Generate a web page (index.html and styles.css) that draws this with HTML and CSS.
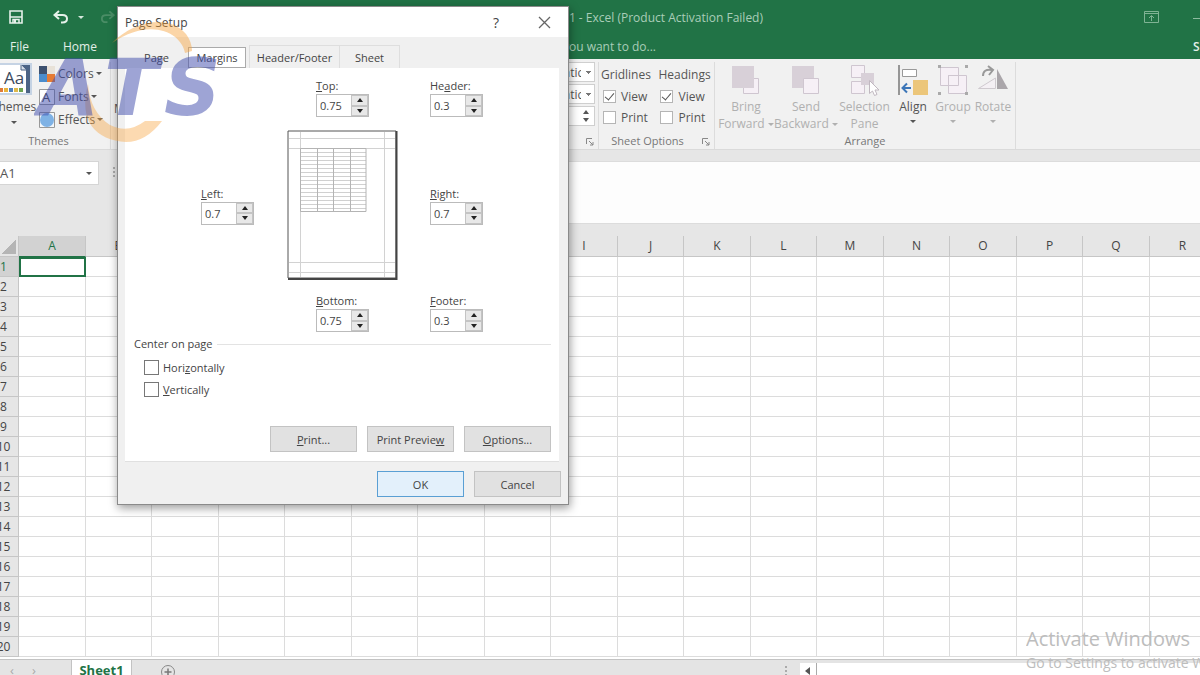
FILE: index.html
```
<!DOCTYPE html>
<html lang="en">
<head>
    <meta charset="utf-8">
    <title>Book1 - Excel</title>
    <link rel="stylesheet" href="styles.css">
</head>
<body>
<div class="app">
    <header class="top">
        <div class="title-bar">
            <div class="quick">
                <button class="icon-btn" aria-label="Save">
                    <svg width="14" height="14" viewBox="0 0 14 14"><path d="M1 1h12v12H1z" fill="none" stroke="#e6f1ea" stroke-width="1.6"/><path d="M1 7h12M4 13V9.500h6V13" fill="none" stroke="#e6f1ea" stroke-width="1.500"/><path d="M5 10h2v3H5z" fill="#e6f1ea"/></svg>
                </button>
                <button class="icon-btn undo" aria-label="Undo">
                    <svg width="16" height="14" viewBox="0 0 16 14"><path d="M6 1L1.500 5L6 9M2 5h7.500c6 0 6 7.500 0 7.500H8" fill="none" stroke="#e6f1ea" stroke-width="2"/></svg>
                </button>
                <span class="caret light"></span>
                <button class="icon-btn redo" aria-label="Redo">
                    <svg width="15" height="14" viewBox="0 0 16 14"><path d="M10 1l4.500 4L10 9M14 5H6.500c-6 0-6 7.500 0 7.500H8" fill="none" stroke="#4a8d66" stroke-width="2"/></svg>
                </button>
            </div>
            <span class="window-title">Book1 - Excel (Product Activation Failed)</span>
            <div class="window-buttons">
                <button class="icon-btn" aria-label="Ribbon display options">
                    <svg width="15" height="12" viewBox="0 0 15 12"><path d="M.5.5h14v11H.5zM.5 2.500h14M7.500 10V5M5 7l2.500-2.500L10 7" fill="none" stroke="#7fb394"/></svg>
                </button>
                <button class="icon-btn" aria-label="Minimize">
                    <svg width="12" height="12" viewBox="0 0 12 12"><path d="M0 7.500h12" stroke="#8dbb9f"/></svg>
                </button>
            </div>
        </div>
        <nav class="menu">
            <a href="#" class="menu-file">File</a>
            <a href="#" class="menu-home">Home</a>
            <span class="tell-me">Tell me what you want to do...</span>
            <a href="#" class="sign-in">Sign in</a>
        </nav>
    </header>

    <section class="ribbon">
        <div class="group themes">
            <div class="group-body">
                <button class="themes-btn">
                    <svg width="36" height="32" viewBox="0 0 36 32"><path d="M0 0h36v32H0z" fill="#c5d3e4"/><path d="M20 2h14v28H20z" fill="#4c6486"/><path d="M2 2h23l5 5v23H2z" fill="#fff"/><path d="M25 2v5h5" fill="#d7dee8" stroke="#4c6486"/><text x="8" y="21" class="aa">Aa</text><path d="M3 25h4v4H3z" fill="#e07b39"/><path d="M8 25h4v4H8z" fill="#e8b33c"/><path d="M13 25h4v4h-4z" fill="#4f82bd"/><path d="M18 25h4v4h-4z" fill="#deb94c"/><path d="M23 25h4v4h-4z" fill="#6ba351"/></svg>
                    <span>Themes</span>
                    <i class="caret"></i>
                </button>
                <div class="theme-list">
                    <button><svg width="18" height="18" viewBox="0 0 18 18"><path d="M1 1h8v8H1z" fill="#3d5170"/><path d="M9 1h8v8H9z" fill="#e8e2d8"/><path d="M1 9h8v8H1z" fill="#4b8ccb"/><path d="M9 9h8v8H9z" fill="#e57b35"/></svg>Colors<span class="caret"></span></button>
                    <button><svg width="18" height="18" viewBox="0 0 18 18"><path d="M1.500 1.500h15v15h-15z" fill="#fff" stroke="#999"/><text x="4" y="14" class="font-a">A</text></svg>Fonts<span class="caret"></span></button>
                    <button><svg width="18" height="18" viewBox="0 0 18 18"><path d="M1.500 1.500h15v15h-15z" fill="#f4f7fa" stroke="#999"/><circle cx="9" cy="9" r="7" fill="#7fb2e5"/></svg>Effects<span class="caret"></span></button>
                </div>
            </div>
            <div class="group-name">Themes</div>
        </div>
        <div class="group page-setup">
            <div class="group-body"><button class="margins-btn">Margins</button></div>
        </div>
        <div class="group scale">
            <div class="group-body scale-body">
                <select aria-label="Width"><option>Automatic</option></select>
                <select aria-label="Height"><option>Automatic</option></select>
                <div class="scale-box"><i class="tri up"></i><i class="tri down"></i></div>
            </div>
            <div class="group-name"><svg class="launcher" width="8" height="8" viewBox="0 0 8 8"><path d="M.5 6V.5H6M3 3l4 4M7 4v3H4" fill="none" stroke="#888"/></svg></div>
        </div>
        <div class="group options">
            <div class="group-body options-body">
                <div class="option-col">
                    <span>Gridlines</span>
                    <label><input type="checkbox" checked>View</label>
                    <label><input type="checkbox">Print</label>
                </div>
                <div class="option-col">
                    <span>Headings</span>
                    <label><input type="checkbox" checked>View</label>
                    <label><input type="checkbox">Print</label>
                </div>
            </div>
            <div class="group-name">Sheet Options<svg class="launcher" width="8" height="8" viewBox="0 0 8 8"><path d="M.5 6V.5H6M3 3l4 4M7 4v3H4" fill="none" stroke="#888"/></svg></div>
        </div>
        <div class="group arrange">
            <div class="group-body arrange-body">
                <button class="tool wide" disabled>
                    <svg width="32" height="32" viewBox="0 0 32 32"><path d="M13.500 14.500h15v15h-15z" fill="#f6f0f6" stroke="#cfc6d0"/><path d="M2 2h22v22H2z" fill="#d8d0d8"/></svg>
                    <span>Bring<br>Forward <i class="caret"></i></span>
                </button>
                <button class="tool wide" disabled>
                    <svg width="32" height="32" viewBox="0 0 32 32"><path d="M2 2h22v22H2z" fill="#d8d0d8"/><path d="M13.500 14.500h15v15h-15z" fill="#f6f0f6" stroke="#cfc6d0"/></svg>
                    <span>Send<br>Backward <i class="caret"></i></span>
                </button>
                <button class="tool mid" disabled>
                    <svg width="32" height="32" viewBox="0 0 32 32"><path d="M2.500 1.500h13v12h-13zM2.500 17.500h13v12h-13z" fill="#f6f0f6" stroke="#cfc6d0"/><path d="M12 9h13v12H12z" fill="#d8d0d8"/><path d="M20.500 16.500v13l3-2.500 2 4.500 2.500-1-2-4.500h4z" fill="#fff" stroke="#c0b8c0"/></svg>
                    <span>Selection<br>Pane</span>
                </button>
                <button class="tool">
                    <svg width="32" height="32" viewBox="0 0 32 32"><path d="M2 1v30" stroke="#777" stroke-width="1.500"/><path d="M5.500 5.500h14v7h-14z" fill="#fff" stroke="#999"/><path d="M16 16h15v15H16z" fill="#ecc67a"/><path d="M14 24H6M10 19.500L5.500 24l4.500 4.500" fill="none" stroke="#3c76b8" stroke-width="2"/></svg>
                    <span>Align<i class="caret below"></i></span>
                </button>
                <button class="tool" disabled>
                    <svg width="32" height="32" viewBox="0 0 32 32"><path d="M3.500 3.500h18v18h-18z" fill="#f6f0f6" stroke="#cfc6d0"/><path d="M11.500 11.500h18v18h-18zM11.500 11.500h10v10h-10z" fill="#f6f0f6" stroke="#cfc6d0"/><path d="M1 1h3v3H1zM28 1h3v3h-3zM1 28h3v3H1zM28 28h3v3h-3z" fill="#aaa"/></svg>
                    <span>Group<i class="caret below"></i></span>
                </button>
                <button class="tool" disabled>
                    <svg width="32" height="32" viewBox="0 0 32 32"><path d="M1.500 24.500L18.500 14v10.500z" fill="#f4f0f4" stroke="#cfcacf"/><path d="M20 5l11 20H20z" fill="#aaa6aa"/><path d="M6 12c0-5 3-7 9-6M11 2l5 4-4 5" fill="none" stroke="#999" stroke-width="2"/></svg>
                    <span>Rotate<i class="caret below"></i></span>
                </button>
            </div>
            <div class="group-name">Arrange</div>
        </div>
    </section>

    <section class="formula-bar">
        <div class="name-box"><input type="text" value="A1" aria-label="Name box"><span class="caret"></span></div>
        <div class="dots"><i></i><i></i><i></i></div>
        <input class="formula" type="text" aria-label="Formula">
    </section>

    <main class="sheet">
        <table>
            <colgroup id="cols"><col class="col-head"></colgroup>
            <thead><tr id="letters"><th class="corner"></th></tr></thead>
            <tbody id="rows"></tbody>
        </table>
    </main>

    <footer class="sheet-bar">
        <div class="sheet-nav"><span>‹</span><span>›</span></div>
        <button class="sheet-tab">Sheet1</button>
        <button class="add-sheet" aria-label="New sheet">
            <svg width="16" height="16" viewBox="0 0 16 16"><circle cx="8" cy="8" r="6.500" fill="none" stroke="#888"/><path d="M8 4.500v7M4.500 8h7" stroke="#777" stroke-width="1.500"/></svg>
        </button>
        <div class="dots"><i></i><i></i><i></i></div>
        <button class="scroll-left" aria-label="Scroll left"><i></i></button>
        <div class="scroll-track"></div>
    </footer>
</div>

<div class="activate">
    <div class="activate-title">Activate Windows</div>
    <div>Go to Settings to activate Windows.</div>
</div>

<div class="dialog" role="dialog" aria-label="Page Setup">
    <div class="dialog-title">
        <span>Page Setup</span>
        <button class="help" aria-label="Help">?</button>
        <button aria-label="Close"><svg width="13" height="13" viewBox="0 0 13 13"><path d="M1 1l11 11M12 1L1 12" stroke="#666" stroke-width="1.300"/></svg></button>
    </div>
    <div class="tabs">
        <button class="tab-page">Page</button>
        <button class="active">Margins</button>
        <button class="tab-hf">Header/Footer</button>
        <button class="tab-sheet">Sheet</button>
    </div>
    <div class="panel">
        <div class="margins">
            <div class="field top-field"><label for="top"><u>T</u>op:</label><div class="spin"><input id="top" type="text" value="0.75"><span class="arrows"><button aria-label="Up"><i class="tri up"></i></button><button aria-label="Down"><i class="tri down"></i></button></span></div></div>
            <div class="field right-col"><label for="header">He<u>a</u>der:</label><div class="spin"><input id="header" type="text" value="0.3"><span class="arrows"><button aria-label="Up"><i class="tri up"></i></button><button aria-label="Down"><i class="tri down"></i></button></span></div></div>
            <div class="field left-col"><label for="left"><u>L</u>eft:</label><div class="spin"><input id="left" type="text" value="0.7"><span class="arrows"><button aria-label="Up"><i class="tri up"></i></button><button aria-label="Down"><i class="tri down"></i></button></span></div></div>
            <svg class="preview" width="111" height="150" viewBox="0 0 111 150">
                <path d="M1 1h108v147H1z" fill="#fff" stroke="#555"/>
                <path d="M109.500 1v148H1" fill="none" stroke="#444" stroke-width="2"/>
                <path d="M13.500 2v145M97.500 2v145M2 8.500h106M2 18.500h106M2 132.500h106M2 142.500h106" stroke="#d2d2d2"/>
                <path d="M13 22.500h66M13 26.500h66M13 30.500h66M13 34.500h66M13 38.500h66M13 42.500h66M13 46.500h66M13 50.500h66M13 54.500h66M13 58.500h66M13 62.500h66M13 66.500h66M13 70.500h66M13 74.500h66M13 78.500h66" stroke="#d0d0d0"/>
                <path d="M13.500 18.500h65.500v63H13.500zM30.500 18v63M46.500 18v63M63.500 18v63" fill="none" stroke="#b4b4b4"/>
            </svg>
            <div class="field right-col"><label for="right"><u>R</u>ight:</label><div class="spin"><input id="right" type="text" value="0.7"><span class="arrows"><button aria-label="Up"><i class="tri up"></i></button><button aria-label="Down"><i class="tri down"></i></button></span></div></div>
            <div class="field top-field"><label for="bottom"><u>B</u>ottom:</label><div class="spin"><input id="bottom" type="text" value="0.75"><span class="arrows"><button aria-label="Up"><i class="tri up"></i></button><button aria-label="Down"><i class="tri down"></i></button></span></div></div>
            <div class="field right-col"><label for="footer"><u>F</u>ooter:</label><div class="spin"><input id="footer" type="text" value="0.3"><span class="arrows"><button aria-label="Up"><i class="tri up"></i></button><button aria-label="Down"><i class="tri down"></i></button></span></div></div>
        </div>
        <div class="center-title">Center on page</div>
        <div class="center-list">
            <label><input type="checkbox"><span>Hori<u>z</u>ontally</span></label>
            <label><input type="checkbox"><span><u>V</u>ertically</span></label>
        </div>
        <div class="panel-buttons">
            <button class="btn"><u>P</u>rint...</button>
            <button class="btn">Print Previe<u>w</u></button>
            <button class="btn"><u>O</u>ptions...</button>
        </div>
    </div>
    <div class="dialog-buttons">
        <button class="btn ok">OK</button>
        <button class="btn">Cancel</button>
    </div>
</div>

<svg class="logo" width="200" height="130" viewBox="0 0 200 130">
    <path d="M78 29C100 6 136 0 152 20Q158 28 158 37L151 39C148 20 118 2 78 29z" fill="#f7a23c" opacity=".45"/>
    <path d="M54 70C44 108 62 126 92 128Q112 128 128 107L111 107Q94 120 76 111Q56 98 54 70z" fill="#f7a23c" opacity=".4"/>
    <text x="4 70 130" y="101" class="logo-text">ATS</text>
</svg>

<script>
    const letters = 'ABCDEFGHIJKLMNOPQR'.split('');
    const cols = document.getElementById('cols');
    const head = document.getElementById('letters');
    const rows = document.getElementById('rows');

    letters.forEach(letter => {
        cols.appendChild(document.createElement('col'));
        const th = document.createElement('th');
        th.textContent = letter;
        head.appendChild(th);
    });

    for (let i = 1; i <= 20; i++) {
        const tr = document.createElement('tr');
        tr.innerHTML = `<th>${i}</th>` + '<td></td>'.repeat(letters.length);
        rows.appendChild(tr);
    }
</script>
</body>
</html>
```

FILE: styles.css
```
* {
    box-sizing: border-box;
}

body {
    margin: 0;
    overflow: hidden;
    font-family: "Open Sans", "Noto Sans", sans-serif;
    font-size: 12px;
    color: #555;
}

button, input, select {
    font: inherit;
    color: inherit;
    margin: 0;
}

button {
    padding: 0;
    border: none;
    background: none;
}

.app {
    height: 100vh;
    display: flex;
    flex-direction: column;
}

.caret {
    display: inline-block;
    border: 3px solid transparent;
    border-top-color: currentColor;
    border-bottom: none;
    vertical-align: middle;
}

.light {
    color: #d5e7dc;
}

/* title and menu */
.top {
    background: #217346;
    color: #d7e8de;
}

.title-bar {
    height: 34px;
    display: flex;
    align-items: center;
}

.quick {
    width: 117px;
    height: 34px;
    padding-left: 9px;
    display: flex;
    align-items: center;
    overflow: hidden;
}

.icon-btn {
    display: flex;
}

.undo {
    margin: 0 9px 0 30px;
}

.redo {
    margin-left: 16px;
}

.window-title {
    width: 646px;
    text-align: right;
    color: #a9cdb8;
}

.window-buttons {
    margin: 0 -5px 0 auto;
    display: flex;
    gap: 34px;
}

.menu {
    height: 25px;
    display: flex;
    align-items: center;
    white-space: nowrap;
    overflow: hidden;
}

.menu a {
    color: #e3efe8;
    text-decoration: none;
}

.menu-file {
    width: 63px;
    padding-left: 10px;
}

.menu-home {
    width: 54px;
}

.tell-me {
    width: 539px;
    text-align: right;
    color: #a9cdb8;
}

.menu .sign-in {
    width: 7px;
    margin-left: auto;
    font-weight: 600;
}

/* ribbon */
.ribbon {
    height: 91px;
    display: flex;
    background: #f1f1f1;
    border-bottom: 1px solid #dadada;
}

.group {
    display: flex;
    flex-direction: column;
    flex-shrink: 0;
    margin: 3px 0 0;
    border-right: 1px solid #dcdcdc;
}

.group-body {
    height: 72px;
    display: flex;
}

.group-name {
    height: 16px;
    line-height: 16px;
    font-size: 11px;
    text-align: center;
    color: #777;
    position: relative;
}

.launcher {
    position: absolute;
    right: 4px;
    top: 5px;
}

.themes {
    width: 111px;
}

.themes .group-name {
    padding-right: 13px;
}

.themes-btn {
    width: 48px;
    margin-left: -10px;
    padding-top: 1px;
    display: flex;
    flex-direction: column;
    align-items: center;
}

.themes-btn span {
    line-height: 24px;
}

.themes-btn .caret {
    margin-top: 2px;
}

.aa {
    font-size: 17px;
    fill: #3c4a5e;
}

.font-a {
    font-size: 13px;
    fill: #444;
}

.theme-list {
    display: flex;
    flex-direction: column;
}

.theme-list button {
    height: 23px;
    display: flex;
    align-items: center;
    gap: 2px;
}

.page-setup {
    width: 400px;
}

.margins-btn {
    padding: 20px 0 0 3px;
}

.scale {
    width: 88px;
}

.scale-body {
    flex-direction: column;
    align-items: flex-end;
    padding-right: 3px;
}

.scale select,
.scale-box {
    width: 72px;
    height: 20px;
    margin-bottom: 2px;
    padding: 0 13px 0 2px;
    background: #fff;
    border: 1px solid #cfcfcf;
    appearance: none;
}

.scale select {
    background: linear-gradient(#777, #777) 62px 8px / 5px 1px no-repeat,
        linear-gradient(#777, #777) 63px 9px / 3px 1px no-repeat,
        linear-gradient(#777, #777) 64px 10px / 1px 1px no-repeat, #fff;
}

.scale-box {
    padding: 3px 5px;
    display: flex;
    flex-direction: column;
    align-items: flex-end;
    justify-content: space-between;
}

.options {
    width: 116px;
}

.options-body {
    padding: 2px 0 0 2px;
}

.option-col {
    width: 58px;
    display: flex;
    flex-direction: column;
}

.option-col + .option-col {
    width: 56px;
}

.option-col span {
    line-height: 22px;
}

.option-col label {
    height: 21px;
    display: flex;
    align-items: center;
    gap: 5px;
    padding-left: 2px;
}

.options .group-name {
    padding-right: 18px;
}

input[type="checkbox"] {
    appearance: none;
    width: 13px;
    height: 13px;
    background: #fff;
    border: 1px solid #b5b5b5;
    display: flex;
    justify-content: center;
}

input[type="checkbox"]:checked::before {
    content: "";
    width: 4px;
    height: 8px;
    border: solid #555;
    border-width: 0 1px 1px 0;
    transform: rotate(40deg);
}

.arrange {
    width: 301px;
}

.arrange-body {
    padding: 2px 0 0 1px;
}

.tool {
    width: 40px;
    display: flex;
    flex-direction: column;
    align-items: center;
    gap: 2px;
    line-height: 17px;
}

.tool span {
    white-space: nowrap;
}

.tool:disabled {
    color: #b0b0b0;
}

.tool.wide {
    width: 60px;
}

.tool.mid {
    width: 57px;
}

.tool .below {
    display: block;
    width: 6px;
    margin: 5px auto 0;
}

/* formula bar */
.formula-bar {
    height: 86px;
    padding-top: 11px;
    display: flex;
    align-items: flex-start;
    background: #e6e6e6;
}

.name-box {
    width: 99px;
    height: 24px;
    display: flex;
    align-items: center;
    background: #fff;
    border: 1px solid #d5d5d5;
    border-left: none;
}

.name-box input {
    width: 86px;
    padding: 0;
    border: none;
    background: none;
    outline: none;
    font-size: 13px;
}

.dots {
    display: flex;
    flex-direction: column;
    gap: 2px;
    padding: 6px 14px;
}

.dots i {
    width: 2px;
    height: 2px;
    background: #aaa;
}

.formula {
    flex: 1;
    height: 63px;
    margin-left: 70px;
    border: 1px solid #dcdcdc;
    border-right: none;
    background: #fdfdfd;
}

/* grid */
.sheet {
    flex: 1;
    min-height: 0;
    overflow: hidden;
    background: #fff;
}

.sheet table {
    width: 1224px;
    margin-left: -8px;
    table-layout: fixed;
    border-collapse: separate;
    border-spacing: 0;
}

.sheet col {
    width: 66px;
}

.sheet col:nth-child(even) {
    width: 67px;
}

.sheet .col-head {
    width: 27px;
}

.sheet th,
.sheet td {
    height: 20px;
    padding: 0;
    border: solid #dcdcdc;
    border-width: 0 1px 1px 0;
    line-height: 19px;
}

.sheet th {
    background: #e6e6e6;
    border-color: #c6c6c6;
    font-weight: 400;
    color: #444;
}

.sheet tbody th {
    padding-right: 3px;
}

.sheet thead th {
    height: 21px;
    line-height: 20px;
}

.sheet thead th:nth-child(2),
.sheet tbody tr:first-child th {
    background: #d2d2d2;
    color: #217346;
}

.sheet thead th:nth-child(2) {
    border-bottom-color: #217346;
}

.sheet .corner {
    background: linear-gradient(135deg, transparent 50%, #b5b5b5 50%) right 2px bottom 2px / 14px 14px no-repeat, #e6e6e6;
}

.sheet tbody tr:first-child td:nth-child(2) {
    border: 2px solid #217346;
}

/* sheet tabs */
.sheet-bar {
    height: 16px;
    display: flex;
    align-items: flex-start;
    overflow: hidden;
    background: #e4e4e4;
    border-top: 1px solid #c3c3c3;
}

.sheet-nav {
    width: 71px;
    padding-left: 10px;
    display: flex;
    gap: 18px;
    font-size: 13px;
    line-height: 20px;
    color: #aaa;
}

.sheet-tab {
    width: 61px;
    background: #fff;
    border: solid #c3c3c3;
    border-width: 0 1px;
    color: #217346;
    font-size: 13px;
    font-weight: 700;
    line-height: 20px;
}

.add-sheet {
    margin: 4px 0 0 28px;
}

.sheet-bar .dots {
    margin-left: auto;
    padding: 6px 13px;
}

.scroll-left {
    width: 16px;
    height: 16px;
    margin-top: 3px;
    padding-left: 5px;
    background: #fff;
}

.scroll-left i {
    display: block;
    width: 5px;
    border: 4px solid transparent;
    border-right: 5px solid #555;
    border-left: none;
}

.scroll-track {
    width: 32%;
    height: 16px;
    margin-top: 3px;
    border-left: 1px solid #aaa;
    background: #fff;
}

.activate {
    position: absolute;
    left: 1026px;
    bottom: 2px;
    width: 174px;
    overflow: hidden;
    white-space: nowrap;
    font-size: 14px;
    line-height: 20px;
    color: #bdbdbd;
}

.activate-title {
    font-size: 20px;
    line-height: 28px;
}

/* page setup dialog */
.dialog {
    position: absolute;
    left: 117px;
    top: 6px;
    width: 452px;
    background: #f0f0f0;
    border: 1px solid #8a8a8a;
    box-shadow: 1px 3px 9px rgba(0, 0, 0, 0.4);
    font-size: 11px;
    color: #444;
}

.dialog-title {
    height: 30px;
    padding: 0 17px 0 7px;
    display: flex;
    align-items: center;
    background: #fff;
    font-size: 12px;
}

.dialog-title span {
    flex: 1;
}

.dialog-title button {
    display: flex;
}

.dialog-title .help {
    margin-right: 39px;
    font-size: 14px;
}

.tabs {
    height: 31px;
    padding: 8px 0 0 7px;
    display: flex;
}

.tabs button {
    height: 23px;
    border: 1px solid #dedede;
    border-bottom: none;
}

.tabs .tab-page {
    width: 63px;
    border-color: transparent;
}

.tabs .active {
    height: 21px;
    width: 58px;
    margin-top: 2px;
    border: 1px solid #aaa;
    background: #fff;
}

.tabs .tab-hf {
    width: 91px;
    margin-left: 3px;
}

.tabs .tab-sheet {
    width: 60px;
    border-left: none;
}

.panel {
    margin: 0 9px 0 7px;
    padding: 10px 8px 9px;
    background: #fff;
    border-bottom: 1px solid #e0e0e0;
}

.margins {
    display: grid;
    grid-template-columns: 86px 111px 53px;
    row-gap: 13px;
    padding-left: 68px;
    align-items: center;
}

.top-field {
    grid-column: 2;
    justify-self: center;
}

.left-col {
    grid-column: 1;
}

.right-col {
    grid-column: 3;
    margin-left: 32px;
}

.field {
    width: 53px;
}

.field label {
    display: block;
    line-height: 16px;
}

.preview {
    display: block;
}

.spin {
    height: 23px;
    display: flex;
    border: 1px solid #bbb;
    background: #fff;
}

.spin input {
    width: 34px;
    padding: 0 0 0 3px;
    border: none;
    outline: none;
}

.arrows {
    flex: 1;
    display: flex;
    flex-direction: column;
}

.arrows button {
    flex: 1;
    display: flex;
    align-items: center;
    justify-content: center;
    background: #e8e8e8;
    border: 1px solid #c4c4c4;
    color: #222;
}

.tri {
    width: 0;
    border: 3px solid transparent;
}

.up {
    border-top: none;
    border-bottom: 4px solid currentColor;
}

.down {
    border-bottom: none;
    border-top: 4px solid currentColor;
}

.center-title {
    margin: 4px 0 4px 1px;
    display: flex;
    align-items: center;
    gap: 4px;
    line-height: 16px;
}

.center-title::after {
    content: "";
    flex: 1;
    border-top: 1px solid #e3e3e3;
}

.center-list label {
    height: 22px;
    padding-left: 11px;
    display: flex;
    align-items: center;
    gap: 4px;
}

.center-list input[type="checkbox"] {
    width: 15px;
    height: 15px;
    border-color: #777;
}

.panel-buttons {
    margin-top: 26px;
    display: flex;
    justify-content: flex-end;
    gap: 10px;
}

.btn {
    width: 87px;
    height: 26px;
    background: #e1e1e1;
    border: 1px solid #c3c3c3;
}

.dialog-buttons {
    padding: 9px 7px 7px;
    display: flex;
    justify-content: flex-end;
    gap: 10px;
}

.ok {
    background: #e3f0fb;
    border-color: #5a9fd4;
}

/* watermark logo */
.logo {
    position: absolute;
    left: 34px;
    top: 14px;
    pointer-events: none;
}

.logo-text {
    font: italic bold 79px "DejaVu Sans", sans-serif;
    fill: #3f4cac;
    opacity: 0.5;
}
```
